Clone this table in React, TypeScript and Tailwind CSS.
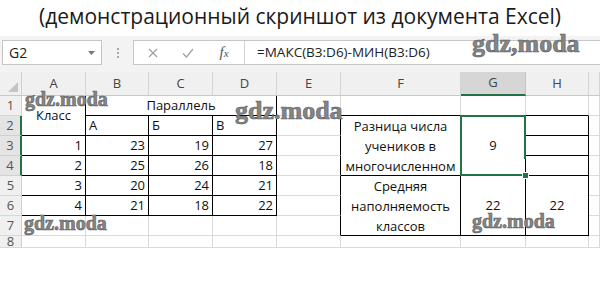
import React from "react";

type CProps = {
  r?: boolean;
  b?: boolean;
  className?: string;
  children?: React.ReactNode;
};

function C({ r, b, className, children }: CProps) {
  return (
    <div
      className={`border-r border-b ${r ? "border-r-black" : "border-r-[#dadada]"} ${
        b ? "border-b-black" : "border-b-[#dadada]"
      } bg-white flex items-center whitespace-nowrap text-[13px] text-[#111] ${className ?? ""}`}
    >
      {children}
    </div>
  );
}

function RH({ n, sel }: { n: string; sel?: boolean }) {
  return (
    <div
      className={
        sel
          ? "border-r-2 border-b border-r-[#217346] border-b-[#d0d0d0] bg-[#e4e4e4] flex items-center justify-center text-[13px] text-[#555]"
          : "border-r border-b border-r-[#cfcfcf] border-b-[#d8d8d8] bg-[#f0f0f0] flex items-center justify-center text-[13px] text-[#555]"
      }
    >
      {n}
    </div>
  );
}

function CH({ l, sel }: { l: string; sel?: boolean }) {
  return (
    <div
      className={
        sel
          ? "border-r border-b-2 border-r-[#c4c4c4] border-b-[#217346] bg-[#d6d6d6] flex items-center justify-center text-[13px] text-[#444]"
          : "border-r border-b border-r-[#d4d4d4] border-b-[#c8c8c8] bg-[#f0f0f0] flex items-center justify-center text-[13px] text-[#444]"
      }
    >
      {l}
    </div>
  );
}

function N({ v }: { v: string }) {
  return (
    <C r b className="justify-end pr-[3px]">
      {v}
    </C>
  );
}

function WM({ className, text }: { className: string; text?: string }) {
  return (
    <div
      className={`absolute font-['Liberation_Serif',serif] font-bold leading-none text-[#858585] [-webkit-text-stroke:0.6px_#5e5e5e] pointer-events-none ${className}`}
    >
      {text ?? "gdz.moda"}
    </div>
  );
}

export default function App() {
  const rows = [
    ["1", "23", "19", "27"],
    ["2", "25", "26", "18"],
    ["3", "20", "24", "21"],
    ["4", "21", "18", "22"],
  ];
  return (
    <div className="relative w-[600px] h-[284px] bg-white overflow-hidden font-['Open_Sans',sans-serif]">
      {/* Title */}
      <div className="h-[36px] flex items-center justify-center text-[21px] text-[#1a1a1a] pb-[2px]">
        (демонстрационный скриншот из документа Excel)
      </div>

      {/* Formula bar */}
      <div className="h-[36px] bg-[#f3f3f3] flex items-start pt-[4px] pl-[2px]">
        <div className="w-[100px] h-[25px] border border-[#c6c6c6] bg-white flex items-center justify-between pl-[6px] pr-[6px]">
          <span className="text-[14px] text-[#222]">G2</span>
          <svg width="7" height="4" viewBox="0 0 7 4">
            <path d="M0 0 L7 0 L3.5 4 Z" fill="#777" />
          </svg>
        </div>
        <div className="w-[31px] h-[25px] flex flex-col items-center justify-center gap-[2px]">
          <div className="w-[2px] h-[2px] bg-[#a8a8a8]" />
          <div className="w-[2px] h-[2px] bg-[#a8a8a8]" />
          <div className="w-[2px] h-[2px] bg-[#a8a8a8]" />
        </div>
        <div className="flex-1 h-[25px] border border-r-0 border-[#c6c6c6] bg-white flex items-center">
          <div className="w-[111px] h-full flex items-center border-r border-[#d4d4d4]">
            <div className="w-[36px] flex justify-center pl-[2px]">
              <svg width="10" height="10" viewBox="0 0 10 10">
                <path d="M1 1 L9 9 M9 1 L1 9" stroke="#a0a0a0" strokeWidth="1.2" fill="none" />
              </svg>
            </div>
            <div className="w-[36px] flex justify-center">
              <svg width="12" height="10" viewBox="0 0 12 10">
                <path d="M1 5.5 L4.5 9 L11 1" stroke="#a0a0a0" strokeWidth="1.2" fill="none" />
              </svg>
            </div>
            <div className="w-[36px] flex justify-center">
              <span className="font-['Liberation_Serif',serif] italic text-[15px] text-[#555] leading-none">
                f<span className="text-[11px]">x</span>
              </span>
            </div>
          </div>
          <div className="pl-[12px] text-[13.5px] text-[#222]">=МАКС(B3:D6)-МИН(B3:D6)</div>
        </div>
      </div>

      {/* Sheet */}
      <div className="grid grid-cols-[22px_64px_63px_64px_64px_64px_120px_65px_63px_11px] grid-rows-[24px_repeat(7,20px)_12px]">
        {/* header */}
        <div className="border-r border-b border-r-[#cfcfcf] border-b-[#c8c8c8] bg-[#f0f0f0] flex items-end justify-end p-[3px]">
          <svg width="10" height="10" viewBox="0 0 10 10">
            <path d="M10 0 L10 10 L0 10 Z" fill="#c4c4c4" />
          </svg>
        </div>
        <CH l="A" />
        <CH l="B" />
        <CH l="C" />
        <CH l="D" />
        <CH l="E" />
        <CH l="F" />
        <CH l="G" sel />
        <CH l="H" />
        <CH l="" />

        {/* row 1 */}
        <RH n="1" />
        <C r b className="row-span-2 justify-center">
          Класс
        </C>
        <C r b className="col-span-3 justify-center">
          Параллель
        </C>
        <C />
        <C b />
        <C b />
        <C b />
        <C />

        {/* row 2 */}
        <RH n="2" sel />
        <C r b className="pl-[3px]">
          А
        </C>
        <C r b className="pl-[3px]">
          Б
        </C>
        <C r b className="pl-[3px]">
          В
        </C>
        <C r />
        <C r b className="row-span-3 justify-center text-center leading-[20px] whitespace-normal">
          Разница числа
          <br />
          учеников в
          <br />
          многочисленном
        </C>
        <div className="row-span-3 relative border-r border-b border-black bg-white flex items-center justify-center text-[13px] text-[#111]">
          9
          <div className="absolute -left-[1px] -top-[1px] -right-[1px] -bottom-[1px] border-l-2 border-t-2 border-b-2 border-[#217346]" />
          <div className="absolute -top-[1px] -right-[1px] w-[2px] h-[44px] bg-[#217346]" />
          <div className="absolute -right-[4px] -bottom-[4px] w-[7px] h-[7px] bg-[#217346] border border-white" />
        </div>
        <C r b />
        <C />

        {/* row 3 */}
        <RH n="3" sel />
        {rows[0].map((v, i) => (
          <N key={i} v={v} />
        ))}
        <C r />
        <C r b />
        <C />

        {/* row 4 */}
        <RH n="4" sel />
        {rows[1].map((v, i) => (
          <N key={i} v={v} />
        ))}
        <C r />
        <C r b />
        <C />

        {/* row 5 */}
        <RH n="5" />
        {rows[2].map((v, i) => (
          <N key={i} v={v} />
        ))}
        <C r />
        <C r b className="row-span-3 justify-center text-center leading-[20px] whitespace-normal">
          Средняя
          <br />
          наполняемость
          <br />
          классов
        </C>
        <C r b className="row-span-3 justify-center">
          22
        </C>
        <C r b className="row-span-3 justify-center">
          22
        </C>
        <C />

        {/* row 6 */}
        <RH n="6" />
        {rows[3].map((v, i) => (
          <N key={i} v={v} />
        ))}
        <C r />
        <C />

        {/* row 7 */}
        <RH n="7" />
        <C />
        <C />
        <C />
        <C />
        <C r />
        <C />

        {/* row 8 */}
        <RH n="8" />
        <C />
        <C />
        <C />
        <C />
        <C />
        <C />
        <C />
        <C />
        <C />
      </div>

      {/* watermarks */}
      <WM className="left-[25px] top-[89px] text-[20px]" />
      <WM className="left-[235px] top-[98px] text-[26px]" />
      <WM className="left-[472px] top-[31px] text-[26px]" text="gdz,moda" />
      <WM className="left-[24px] top-[213px] text-[20px]" />
      <WM className="left-[472px] top-[211px] text-[20px]" />
    </div>
  );
}
